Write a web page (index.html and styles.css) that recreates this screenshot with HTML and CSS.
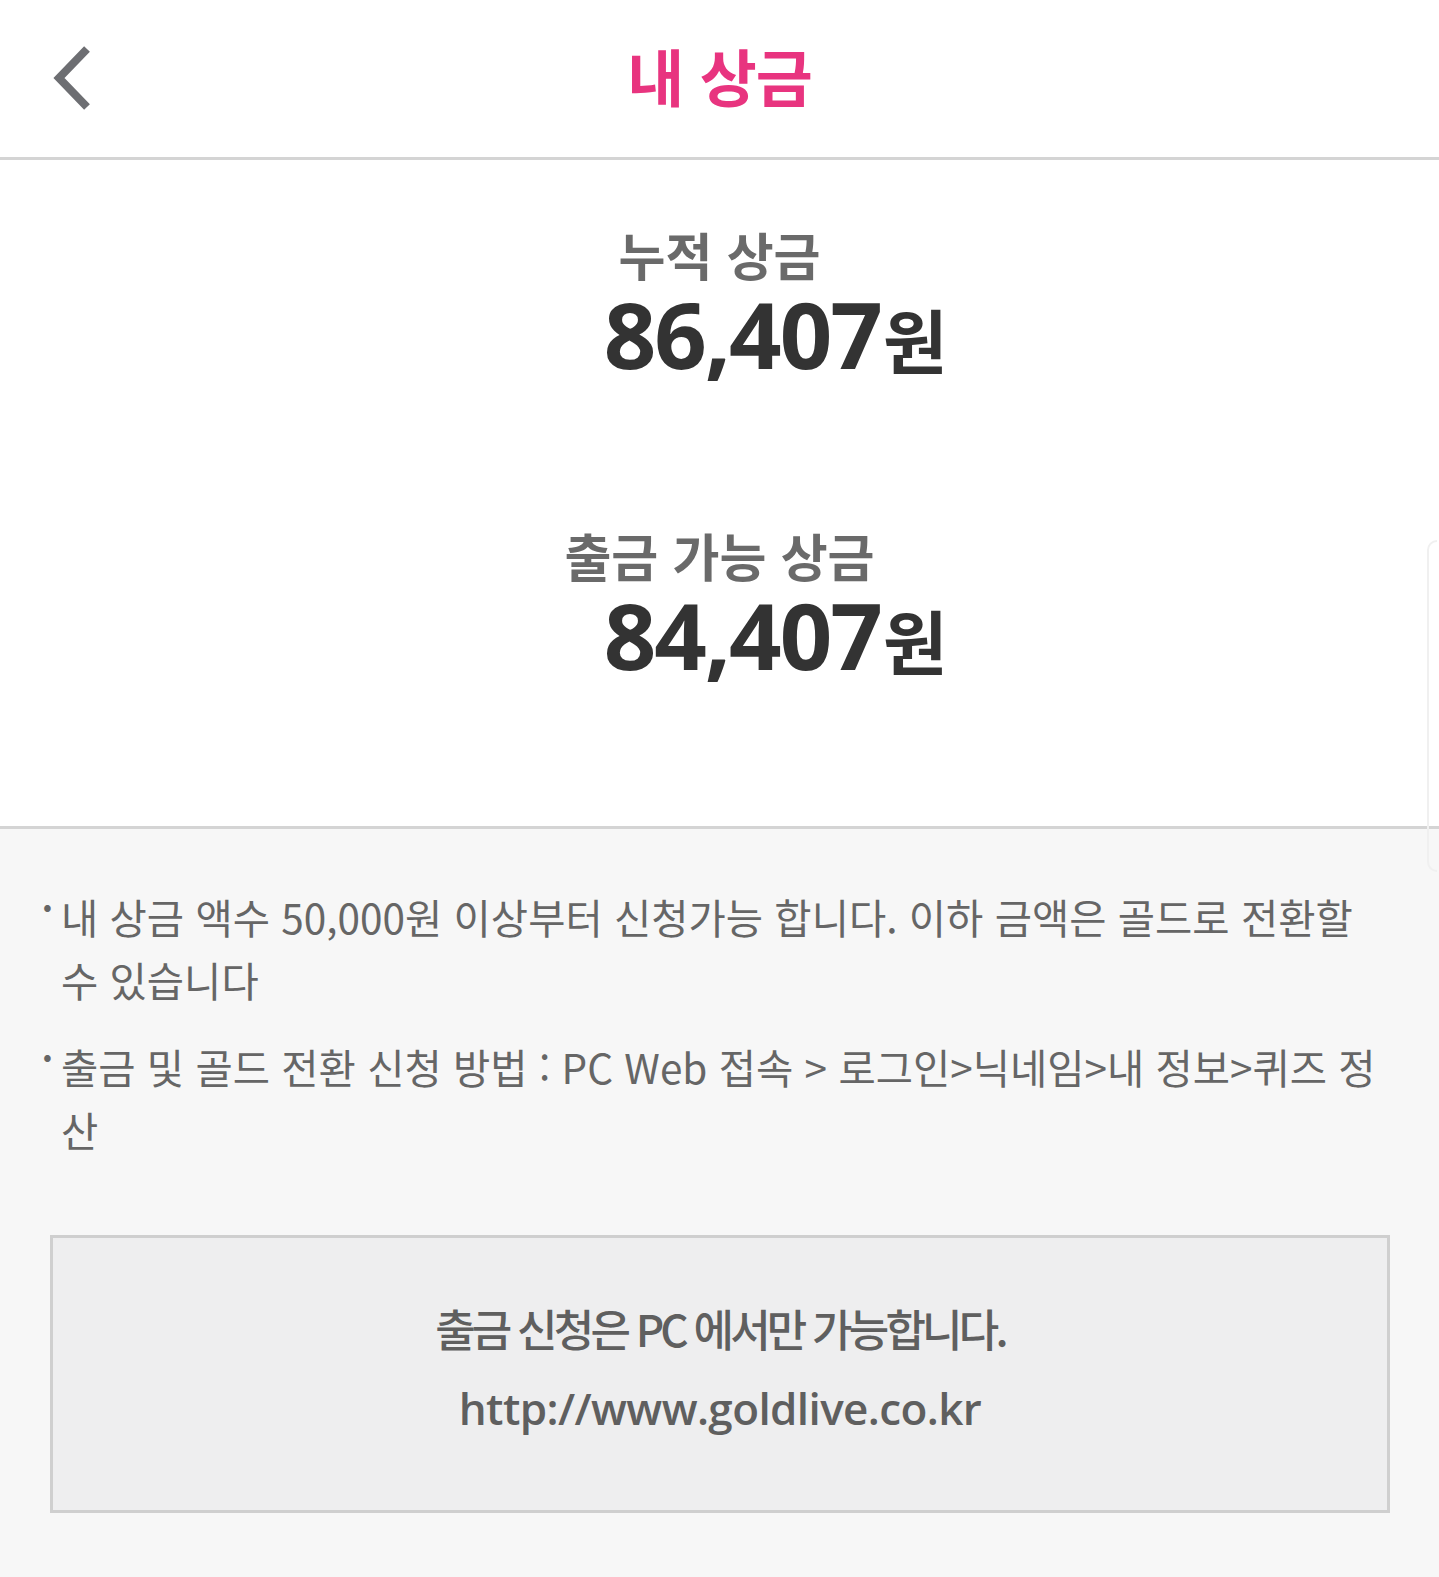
FILE: index.html
```html
<!DOCTYPE html>
<html lang="ko">
<head>
<meta charset="utf-8">
<title>내 상금</title>
<link rel="stylesheet" href="styles.css">
</head>
<body>
<div class="page">
  <header class="topbar">
    <a class="back" href="#" aria-label="뒤로">
      <svg width="44" height="64" viewBox="0 0 44 64"><polyline points="37,3 9,32 37,61" fill="none" stroke="#6d6e72" stroke-width="8" stroke-linejoin="miter" stroke-linecap="butt"/></svg>
    </a>
    <h1 class="title">내 상금</h1>
  </header>
  <section class="summary">
    <div class="stat">
      <div class="stat-label">누적 상금</div>
      <div class="stat-value">86,407<span class="unit">원</span></div>
    </div>
    <div class="stat">
      <div class="stat-label">출금 가능 상금</div>
      <div class="stat-value">84,407<span class="unit">원</span></div>
    </div>
  </section>
  <section class="info">
    <ul class="notes">
      <li>내 상금 액수 50,000원 이상부터 신청가능 합니다. 이하 금액은 골드로 전환할 수 있습니다</li>
      <li>출금 및 골드 전환 신청 방법 : PC Web 접속 &gt; 로그인&gt;닉네임&gt;내 정보&gt;퀴즈 정산</li>
    </ul>
    <div class="notice">
      <p class="notice-line">출금 신청은 PC 에서만 가능합니다.</p>
      <p class="notice-url">http://www.goldlive.co.kr</p>
    </div>
  </section>
  <div class="scroll-hint"></div>
</div>
</body>
</html>
```
FILE: styles.css
```css
html, body {
  margin: 0;
  padding: 0;
  background: #f7f7f7;
}
body {
  font-family: "Noto Sans CJK KR", "Noto Sans", sans-serif;
}
.page {
  position: relative;
  width: 1439px;
  min-height: 1577px;
  background: #f7f7f7;
}
.topbar {
  position: relative;
  height: 157px;
  background: #ffffff;
  border-bottom: 3px solid #d4d4d4;
  display: flex;
  align-items: center;
  justify-content: center;
}
.back {
  position: absolute;
  left: 50px;
  top: 46px;
  display: block;
  width: 44px;
  height: 64px;
}
.back svg { display: block; }
.title {
  margin: 0;
  font-size: 62px;
  font-weight: 700;
  color: #e8347f;
  letter-spacing: -1px;
  line-height: 1;
  margin-top: -8px;
}
.summary {
  background: #ffffff;
  border-bottom: 3px solid #d4d4d4;
  padding: 62px 0 138px;
  display: flex;
  flex-direction: column;
  gap: 136px;
}
.stat {
  text-align: center;
}
.stat-label {
  font-size: 51px;
  font-weight: 700;
  color: #6a6a6a;
  line-height: 64px;
}
.stat-value {
  font-family: "Noto Sans", "Noto Sans CJK KR", sans-serif;
  font-size: 92px;
  font-weight: 700;
  color: #333333;
  line-height: 96px;
  padding-left: 112px;
  letter-spacing: -2px;
}
.unit {
  font-family: "Noto Sans CJK KR", sans-serif;
  font-size: 70px;
  font-weight: 700;
  margin-left: 2px;
  letter-spacing: 0;
}
.info {
  padding: 56px 49px 60px 50px;
}
.notes {
  list-style: none;
  margin: 0;
  padding: 0 10px 0 11px;
}
.notes li {
  position: relative;
  font-size: 40.5px;
  line-height: 63px;
  color: #666666;
  letter-spacing: 0;
  margin-bottom: 24px;
}
.notes li::before {
  content: "•";
  position: absolute;
  left: -18px;
  top: -12px;
  font-size: 26px;
  color: #666666;
}
.notice {
  margin-top: 74px;
  background: #eeeeef;
  border: 3px solid #cfcfcf;
  height: 278px;
  padding-bottom: 12px;
  box-sizing: border-box;
  display: flex;
  flex-direction: column;
  align-items: center;
  justify-content: center;
  gap: 16px;
}
.notice p {
  margin: 0;
  color: #5f5f5f;
  font-size: 44px;
  line-height: 64px;
}
.notice-line {
  font-weight: 500;
  letter-spacing: -3.8px;
}
.notice-url {
  font-family: "Open Sans", "Noto Sans", sans-serif;
  font-weight: 600;
  letter-spacing: -0.6px;
}
.scroll-hint {
  position: absolute;
  right: 2px;
  top: 540px;
  width: 8px;
  height: 328px;
  border: 2px solid #f0f0f0;
  border-right: none;
  border-radius: 10px 0 0 10px;
}
```
